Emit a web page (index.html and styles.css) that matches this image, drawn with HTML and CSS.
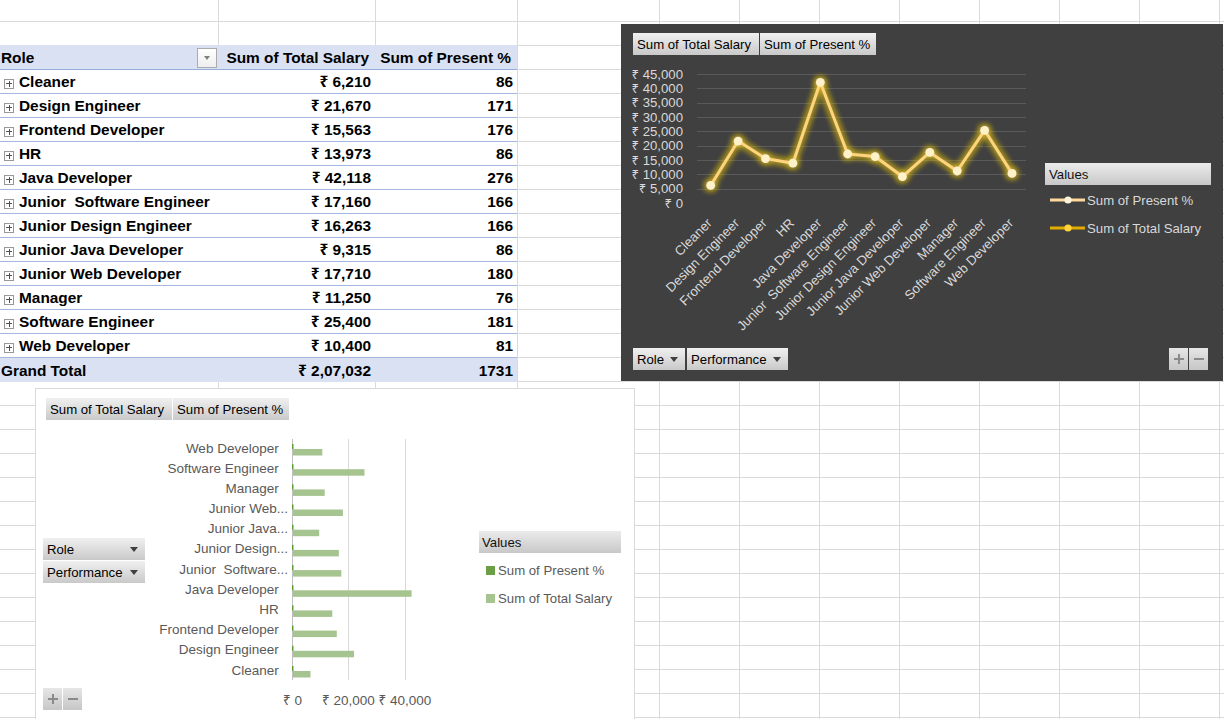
FILE: index.html
```html
<!DOCTYPE html>
<html lang="en">
<head>
<meta charset="utf-8">
<title>Pivot</title>
<link rel="stylesheet" href="styles.css">
</head>
<body>
<div class="sheet">
  <div class="pivot">
    <div class="prow phead">
      <div class="pc pc-head-label">Role<span class="filter-btn"><i class="tri tri-gray"></i></span></div>
      <div class="pc num head-num">Sum of Total Salary</div>
      <div class="pc num head-num">Sum of Present %</div>
    </div>
    <div class="prow"><div class="pc pc-label"><span class="exp"></span>Cleaner</div><div class="pc num">₹ 6,210</div><div class="pc num">86</div></div>
    <div class="prow"><div class="pc pc-label"><span class="exp"></span>Design Engineer</div><div class="pc num">₹ 21,670</div><div class="pc num">171</div></div>
    <div class="prow"><div class="pc pc-label"><span class="exp"></span>Frontend Developer</div><div class="pc num">₹ 15,563</div><div class="pc num">176</div></div>
    <div class="prow"><div class="pc pc-label"><span class="exp"></span>HR</div><div class="pc num">₹ 13,973</div><div class="pc num">86</div></div>
    <div class="prow"><div class="pc pc-label"><span class="exp"></span>Java Developer</div><div class="pc num">₹ 42,118</div><div class="pc num">276</div></div>
    <div class="prow"><div class="pc pc-label"><span class="exp"></span>Junior&nbsp; Software Engineer</div><div class="pc num">₹ 17,160</div><div class="pc num">166</div></div>
    <div class="prow"><div class="pc pc-label"><span class="exp"></span>Junior Design Engineer</div><div class="pc num">₹ 16,263</div><div class="pc num">166</div></div>
    <div class="prow"><div class="pc pc-label"><span class="exp"></span>Junior Java Developer</div><div class="pc num">₹ 9,315</div><div class="pc num">86</div></div>
    <div class="prow"><div class="pc pc-label"><span class="exp"></span>Junior Web Developer</div><div class="pc num">₹ 17,710</div><div class="pc num">180</div></div>
    <div class="prow"><div class="pc pc-label"><span class="exp"></span>Manager</div><div class="pc num">₹ 11,250</div><div class="pc num">76</div></div>
    <div class="prow"><div class="pc pc-label"><span class="exp"></span>Software Engineer</div><div class="pc num">₹ 25,400</div><div class="pc num">181</div></div>
    <div class="prow"><div class="pc pc-label"><span class="exp"></span>Web Developer</div><div class="pc num">₹ 10,400</div><div class="pc num">81</div></div>
    <div class="prow ptotal"><div class="pc pc-total">Grand Total</div><div class="pc num">₹ 2,07,032</div><div class="pc num">1731</div></div>
  </div>

  <div class="chart chart-dark">
    <div class="fields">
      <span class="fbtn w126">Sum of Total Salary</span>
      <span class="fbtn w116">Sum of Present %</span>
    </div>
    <div class="dark-body">
      <svg class="plot-dark" width="412" height="293" viewBox="0 0 412 293">
        <defs>
          <filter id="glow" filterUnits="userSpaceOnUse" x="0" y="0" width="412" height="200">
            <feGaussianBlur in="SourceAlpha" stdDeviation="3.6" result="blur"/>
            <feFlood flood-color="#EBC81A" flood-opacity="0.7"/>
            <feComposite in2="blur" operator="in" result="glowc"/>
            <feMerge><feMergeNode in="glowc"/><feMergeNode in="glowc"/><feMergeNode in="glowc"/><feMergeNode in="SourceGraphic"/></feMerge>
          </filter>
        </defs>
        <g class="grid-dark">
          <line x1="64" y1="19.5" x2="393" y2="19.5"/>
          <line x1="64" y1="33.5" x2="393" y2="33.5"/>
          <line x1="64" y1="48.5" x2="393" y2="48.5"/>
          <line x1="64" y1="62.5" x2="393" y2="62.5"/>
          <line x1="64" y1="76.5" x2="393" y2="76.5"/>
          <line x1="64" y1="91.5" x2="393" y2="91.5"/>
          <line x1="64" y1="105.5" x2="393" y2="105.5"/>
          <line x1="64" y1="119.5" x2="393" y2="119.5"/>
          <line x1="64" y1="134.5" x2="393" y2="134.5"/>
        </g>
        <g class="axis-dark ylabels">
          <text x="50" y="23.5">₹ 45,000</text>
          <text x="50" y="37.9">₹ 40,000</text>
          <text x="50" y="52.2">₹ 35,000</text>
          <text x="50" y="66.6">₹ 30,000</text>
          <text x="50" y="81">₹ 25,000</text>
          <text x="50" y="95.3">₹ 20,000</text>
          <text x="50" y="109.7">₹ 15,000</text>
          <text x="50" y="124.1">₹ 10,000</text>
          <text x="50" y="138.4">₹ 5,000</text>
          <text x="50" y="152.8">₹ 0</text>
        </g>
        <g filter="url(#glow)">
          <polyline class="salary-line" points="77.7,130.46 105.1,86.03 132.5,103.58 159.9,108.15 187.3,27.28 214.7,98.99 242.1,101.57 269.4,121.54 296.8,97.41 324.2,115.98 351.6,75.32 379,118.42"/>
          <g class="salary-dots">
            <circle cx="77.7" cy="130.46" r="4.4"/>
            <circle cx="105.1" cy="86.03" r="4.4"/>
            <circle cx="132.5" cy="103.58" r="4.4"/>
            <circle cx="159.9" cy="108.15" r="4.4"/>
            <circle cx="187.3" cy="27.28" r="4.4"/>
            <circle cx="214.7" cy="98.99" r="4.4"/>
            <circle cx="242.1" cy="101.57" r="4.4"/>
            <circle cx="269.4" cy="121.54" r="4.4"/>
            <circle cx="296.8" cy="97.41" r="4.4"/>
            <circle cx="324.2" cy="115.98" r="4.4"/>
            <circle cx="351.6" cy="75.32" r="4.4"/>
            <circle cx="379" cy="118.42" r="4.4"/>
          </g>
        </g>
        <g class="axis-dark xlabels">
          <text transform="translate(79.7,169) rotate(-45)">Cleaner</text>
          <text transform="translate(107.1,169) rotate(-45)">Design Engineer</text>
          <text transform="translate(134.5,169) rotate(-45)">Frontend Developer</text>
          <text transform="translate(161.9,169) rotate(-45)">HR</text>
          <text transform="translate(189.3,169) rotate(-45)">Java Developer</text>
          <text transform="translate(216.7,169) rotate(-45)">Junior&#160; Software Engineer</text>
          <text transform="translate(244.1,169) rotate(-45)">Junior Design Engineer</text>
          <text transform="translate(271.4,169) rotate(-45)">Junior Java Developer</text>
          <text transform="translate(298.8,169) rotate(-45)">Junior Web Developer</text>
          <text transform="translate(326.2,169) rotate(-45)">Manager</text>
          <text transform="translate(353.6,169) rotate(-45)">Software Engineer</text>
          <text transform="translate(381,169) rotate(-45)">Web Developer</text>
        </g>
      </svg>
      <div class="legend legend-dark">
        <div class="legend-title">Values</div>
        <div class="legend-item">
          <svg width="36" height="10" viewBox="0 0 36 10"><line x1="0" y1="5" x2="35" y2="5" stroke="#FFD89E" stroke-width="3"/><circle cx="18" cy="5" r="3.6" fill="#FFF3DA"/></svg>
          <span>Sum of Present %</span>
        </div>
        <div class="legend-item">
          <svg width="36" height="10" viewBox="0 0 36 10"><line x1="0" y1="5" x2="35" y2="5" stroke="#E2AC00" stroke-width="3"/><circle cx="18" cy="5" r="3.6" fill="#FFD43B"/></svg>
          <span>Sum of Total Salary</span>
        </div>
      </div>
    </div>
    <div class="dark-foot">
      <div class="btn-group">
        <span class="fbtn dd w52">Role<i class="tri"></i></span>
        <span class="fbtn dd w101">Performance<i class="tri"></i></span>
      </div>
      <div class="pm pm-dark">
        <span class="pmbtn plus"></span>
        <span class="pmbtn minus"></span>
      </div>
    </div>
  </div>

  <div class="chart chart-light">
    <div class="fields fields-light">
      <span class="fbtn w126">Sum of Total Salary</span>
      <span class="fbtn w116">Sum of Present %</span>
    </div>
    <div class="light-body">
      <div class="side">
        <span class="fbtn dd w102">Role<i class="tri"></i></span>
        <span class="fbtn dd w102">Performance<i class="tri"></i></span>
        <div class="pm pm-light">
          <span class="pmbtn plus"></span>
          <span class="pmbtn minus"></span>
        </div>
      </div>
      <svg class="plot-light" width="334" height="292" viewBox="0 0 334 292">
        <g class="grid-light">
          <line x1="203.5" y1="19" x2="203.5" y2="260"/>
          <line x1="260.5" y1="19" x2="260.5" y2="260"/>
        </g>
        <line class="axis-line" x1="147.5" y1="19" x2="147.5" y2="260"/>
        <g class="bars">
          <rect x="148" y="29" width="29.3" height="6.5"/>
          <rect x="148" y="49.2" width="71.5" height="6.5"/>
          <rect x="148" y="69.4" width="31.7" height="6.5"/>
          <rect x="148" y="89.5" width="49.9" height="6.5"/>
          <rect x="148" y="109.7" width="26.2" height="6.5"/>
          <rect x="148" y="129.9" width="45.8" height="6.5"/>
          <rect x="148" y="150.1" width="48.3" height="6.5"/>
          <rect x="148" y="170.3" width="118.6" height="6.5"/>
          <rect x="148" y="190.4" width="39.3" height="6.5"/>
          <rect x="148" y="210.6" width="43.8" height="6.5"/>
          <rect x="148" y="230.8" width="61" height="6.5"/>
          <rect x="148" y="251" width="17.5" height="6.5"/>
        </g>
        <g class="ticks">
          <rect x="147" y="24" width="1.5" height="5"/>
          <rect x="147" y="44.2" width="1.5" height="5"/>
          <rect x="147" y="64.4" width="1.5" height="5"/>
          <rect x="147" y="84.5" width="1.5" height="5"/>
          <rect x="147" y="104.7" width="1.5" height="5"/>
          <rect x="147" y="124.9" width="1.5" height="5"/>
          <rect x="147" y="145.1" width="1.5" height="5"/>
          <rect x="147" y="165.3" width="1.5" height="5"/>
          <rect x="147" y="185.4" width="1.5" height="5"/>
          <rect x="147" y="205.6" width="1.5" height="5"/>
          <rect x="147" y="225.8" width="1.5" height="5"/>
          <rect x="147" y="246" width="1.5" height="5"/>
        </g>
        <g class="axis-light catlabels">
          <text x="133.7" y="32.5">Web Developer</text>
          <text x="133.7" y="52.7">Software Engineer</text>
          <text x="133.7" y="72.9">Manager</text>
          <text x="143" y="93">Junior Web...</text>
          <text x="143" y="113.2">Junior Java...</text>
          <text x="143" y="133.4">Junior Design...</text>
          <text x="143" y="153.6">Junior&#160; Software...</text>
          <text x="133.7" y="173.8">Java Developer</text>
          <text x="133.7" y="193.9">HR</text>
          <text x="133.7" y="214.1">Frontend Developer</text>
          <text x="133.7" y="234.3">Design Engineer</text>
          <text x="133.7" y="254.5">Cleaner</text>
        </g>
        <g class="axis-light vallabels">
          <text x="147.5" y="284.5">₹ 0</text>
          <text x="203.5" y="284.5">₹ 20,000</text>
          <text x="260" y="284.5">₹ 40,000</text>
        </g>
      </svg>
      <div class="legend legend-light">
        <div class="legend-title">Values</div>
        <div class="legend-item"><span class="swatch dark-green"></span><span>Sum of Present %</span></div>
        <div class="legend-item"><span class="swatch light-green"></span><span>Sum of Total Salary</span></div>
      </div>
    </div>
  </div>
</div>
</body>
</html>
```

FILE: styles.css
```css
* { box-sizing: border-box; }

body {
  margin: 0;
  font-family: "Liberation Sans", "Noto Sans", "DejaVu Sans", sans-serif;
  color: #000;
}

.sheet {
  position: relative;
  width: 1224px;
  height: 719px;
  overflow: hidden;
  background-color: #fff;
  background-image:
    linear-gradient(to right, transparent 218px, #dadada 218px 219px, transparent 219px 375px, #dadada 375px 376px, transparent 376px 517px, #dadada 517px 518px, transparent 518px),
    repeating-linear-gradient(to right, #dadada 0 1px, transparent 1px 80px),
    repeating-linear-gradient(to bottom, transparent 0 21px, #dadada 21px 22px, transparent 22px 24px);
  background-position: 0 0, 659px 0, 0 0;
  background-size: 100% 100%, 600px 100%, 100% 100%;
  background-repeat: no-repeat;
}

/* ---------- pivot table ---------- */
.pivot {
  width: 517px;
  margin-top: 45px;
  background: #fff;
  font-weight: bold;
  font-size: 15.4px;
}

.prow {
  display: grid;
  grid-template-columns: 218px 157px 142px;
  height: 24px;
  border-bottom: 1px solid #A4B8DF;
}

.pc {
  padding-top: 1px;
  line-height: 22px;
  white-space: nowrap;
}

.num {
  text-align: right;
  padding-right: 4px;
}

.phead {
  height: 25px;
  background: #D9E1F2;
  border-bottom-color: #95AEDC;
}

.phead .pc {
  padding-top: 2px;
}

.head-num {
  padding-right: 6px;
}

.pc-head-label {
  display: flex;
  align-items: center;
  justify-content: space-between;
  padding-left: 1px;
  padding-right: 1px;
}

.filter-btn {
  width: 20px;
  height: 20px;
  border: 1px solid #ababab;
  background: linear-gradient(#ffffff, #eeeeee);
  display: flex;
  align-items: center;
  justify-content: center;
}

.pc-label {
  display: flex;
  align-items: center;
  gap: 5px;
  padding-left: 4px;
}

.pc-total {
  padding-left: 1px;
}

.exp {
  flex: none;
  width: 10px;
  height: 10px;
  margin-top: 3px;
  border: 1px solid #989898;
  background:
    linear-gradient(#505050, #505050) center / 6px 1px no-repeat,
    linear-gradient(#505050, #505050) center / 1px 6px no-repeat,
    #fff;
}

.ptotal {
  background: #D9E1F2;
  border-bottom: 0;
}

.ptotal .pc {
  padding-top: 2px;
}

/* ---------- generic chart pieces ---------- */
.chart {
  position: absolute;
  display: flex;
  flex-direction: column;
}

.fields {
  display: flex;
  gap: 1px;
  height: 22px;
}

.fbtn {
  display: flex;
  align-items: center;
  height: 22px;
  padding: 0 4px;
  background: linear-gradient(#f0f0f0, #c9c9c9);
  color: #000;
  font-size: 13.2px;
  white-space: nowrap;
}

.w126 { width: 126px; }
.w116 { width: 116px; }
.w52 { width: 52px; }
.w101 { width: 101px; }
.w102 { width: 102px; }

.dd {
  justify-content: space-between;
  padding-right: 7px;
}

.tri {
  width: 0;
  height: 0;
  border-left: 4px solid transparent;
  border-right: 4px solid transparent;
  border-top: 5px solid #404040;
}

.tri-gray {
  border-left-width: 3.5px;
  border-right-width: 3.5px;
  border-top: 4px solid #808080;
}

.pm {
  display: flex;
  gap: 1px;
}

.pmbtn {
  width: 19px;
  height: 22px;
  background-color: #d0d0d0;
}

.plus {
  background:
    linear-gradient(#8a8a8a, #8a8a8a) center / 10px 2px no-repeat,
    linear-gradient(#8a8a8a, #8a8a8a) center / 2px 10px no-repeat,
    linear-gradient(#e6e6e6, #c6c6c6);
}

.minus {
  background:
    linear-gradient(#8a8a8a, #8a8a8a) center / 10px 2px no-repeat,
    linear-gradient(#e6e6e6, #c6c6c6);
}

.legend-title {
  height: 22px;
  display: flex;
  align-items: center;
  background: linear-gradient(#ebebeb, #c8c8c8);
  font-size: 13.2px;
  color: #111;
}

.legend-item {
  height: 28px;
  display: flex;
  align-items: center;
  font-size: 13.2px;
  white-space: nowrap;
}

/* ---------- dark line chart ---------- */
.chart-dark {
  left: 621px;
  top: 24px;
  width: 602px;
  height: 357px;
  padding: 9px 12px 11px 12px;
  background: #404040;
}

.dark-body {
  display: flex;
  height: 293px;
}

.plot-dark {
  flex: none;
  display: block;
  overflow: visible;
}

.grid-dark line {
  stroke: #5a5a5a;
  stroke-width: 1;
}

.axis-dark text {
  fill: #d9d9d9;
  font-size: 13.2px;
  font-family: "Liberation Sans", "Noto Sans", "DejaVu Sans", sans-serif;
}

.ylabels text,
.xlabels text {
  text-anchor: end;
}

.salary-line {
  fill: none;
  stroke: #FFD47A;
  stroke-width: 3;
  stroke-linejoin: round;
}

.salary-dots circle {
  fill: #FFF1C8;
}

.legend-dark {
  width: 166px;
  padding-top: 108px;
}

.legend-dark .legend-title {
  padding-left: 4px;
}

.legend-dark .legend-item {
  color: #d9d9d9;
  gap: 1px;
  padding-left: 5px;
}

.legend-dark .legend-title + .legend-item {
  margin-top: 1px;
}

.dark-foot {
  display: flex;
  justify-content: space-between;
  height: 22px;
}

.btn-group {
  display: flex;
  gap: 2px;
}

.pm-dark {
  margin-right: 3px;
}

/* ---------- light bar chart ---------- */
.chart-light {
  left: 35px;
  top: 388px;
  width: 600px;
  height: 340px;
  border: 1px solid #d9d9d9;
  background: #fff;
}

.fields-light {
  margin: 9px 0 0 10px;
}

.light-body {
  display: flex;
  flex: 1;
}

.side {
  width: 102px;
  margin-left: 7px;
  padding-top: 118px;
  display: flex;
  flex-direction: column;
  gap: 1px;
}

.pm-light {
  margin-top: 104px;
}

.plot-light {
  flex: none;
  display: block;
  overflow: visible;
}

.grid-light line {
  stroke: #d9d9d9;
  stroke-width: 1;
}

.axis-line {
  stroke: #bfbfbf;
  stroke-width: 1;
}

.bars rect {
  fill: #A6C48F;
}

.ticks rect {
  fill: #5E9B36;
}

.axis-light text {
  fill: #595959;
  font-size: 13.5px;
  font-family: "Liberation Sans", "Noto Sans", "DejaVu Sans", sans-serif;
}

.catlabels text {
  text-anchor: end;
}

.vallabels text {
  text-anchor: middle;
}

.legend-light {
  width: 142px;
  padding-top: 111px;
}

.legend-light .legend-title {
  padding-left: 3px;
}

.legend-light .legend-item {
  color: #595959;
  padding-left: 7px;
  gap: 3px;
}

.legend-light .legend-title + .legend-item {
  margin-top: 3px;
}

.swatch {
  width: 9px;
  height: 9px;
  flex: none;
}

.dark-green { background: #6A9F45; }
.light-green { background: #A6C48F; }
```
